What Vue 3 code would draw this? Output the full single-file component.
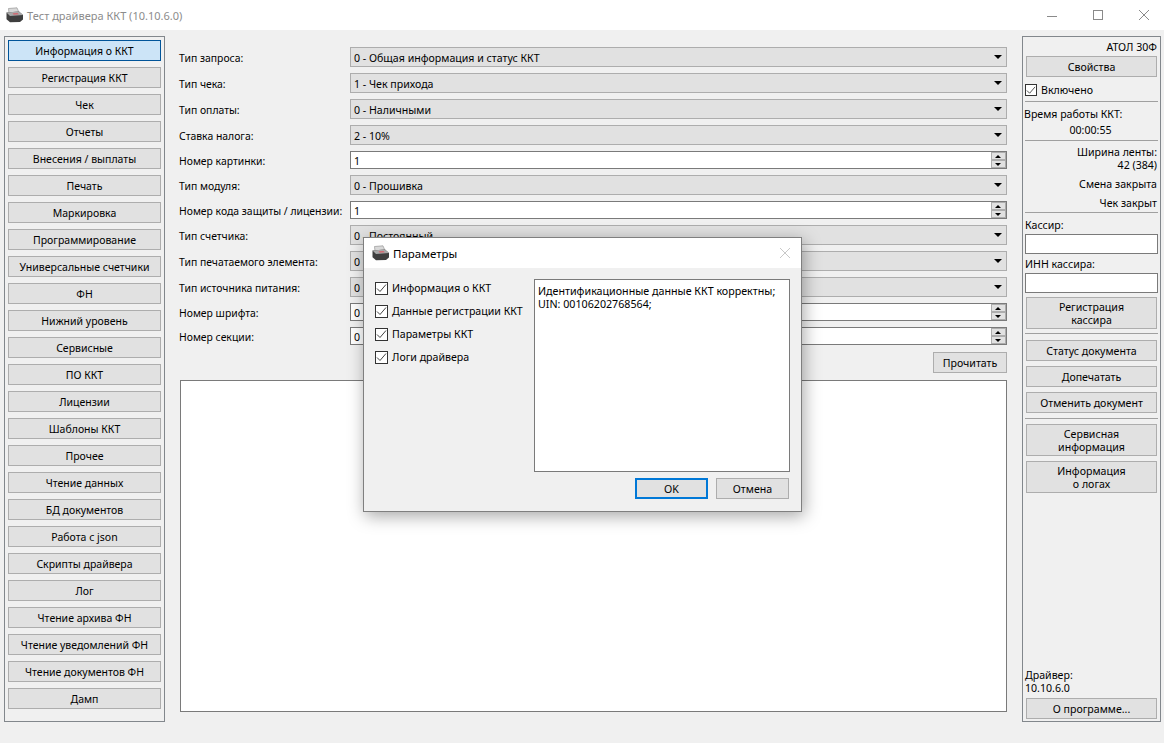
<script setup>
const navItems = ['Информация о ККТ','Регистрация ККТ','Чек','Отчеты','Внесения / выплаты','Печать','Маркировка','Программирование','Универсальные счетчики','ФН','Нижний уровень','Сервисные','ПО ККТ','Лицензии','Шаблоны ККТ','Прочее','Чтение данных','БД документов','Работа с json','Скрипты драйвера','Лог','Чтение архива ФН','Чтение уведомлений ФН','Чтение документов ФН','Дамп']
const fields = [
  { label: 'Тип запроса:', value: '0 - Общая информация и статус ККТ', type: 'select' },
  { label: 'Тип чека:', value: '1 - Чек прихода', type: 'select' },
  { label: 'Тип оплаты:', value: '0 - Наличными', type: 'select' },
  { label: 'Ставка налога:', value: '2 - 10%', type: 'select' },
  { label: 'Номер картинки:', value: '1', type: 'spin' },
  { label: 'Тип модуля:', value: '0 - Прошивка', type: 'select' },
  { label: 'Номер кода защиты / лицензии:', value: '1', type: 'spin' },
  { label: 'Тип счетчика:', value: '0 - Постоянный', type: 'select' },
  { label: 'Тип печатаемого элемента:', value: '0', type: 'select' },
  { label: 'Тип источника питания:', value: '0', type: 'select' },
  { label: 'Номер шрифта:', value: '0', type: 'spin' },
  { label: 'Номер секции:', value: '0', type: 'spin' },
]
const checks = ['Информация о ККТ','Данные регистрации ККТ','Параметры ККТ','Логи драйвера']
</script>

<template>
  <div class="window">
    <header class="titlebar">
      <svg class="appicon" width="18" height="16" viewBox="0 0 18 16">
        <path d="M2.5 1.500L11 .8l2 4.700-10 1z" fill="#d8d8d8" stroke="#8a8a8a" stroke-width=".6"/>
        <path d="M.5 5.500L13 4.500l4 3.500v4.500l-3 2.500-10 .3-3.500-3z" fill="#3f3f3f"/>
        <path d="M.5 5.500L13 4.500l4 3.500L4 9z" fill="#a8a8a8"/>
        <path d="M6.500 6.600l5-.4 1.300 1-5.200.4z" fill="#e2505c"/>
      </svg>
      <span class="apptitle">Тест драйвера ККТ (10.10.6.0)</span>
      <div class="winctl">
        <svg width="12" height="12" viewBox="0 0 12 12"><path d="M1 7.500h10" stroke="#8a8a8a"/></svg>
        <svg width="12" height="12" viewBox="0 0 12 12"><rect x="1.500" y="1.500" width="9" height="9" fill="none" stroke="#8a8a8a"/></svg>
        <svg width="12" height="12" viewBox="0 0 12 12"><path d="M1 1l10 10M11 1L1 11" stroke="#8a8a8a"/></svg>
      </div>
    </header>

    <main class="body">
      <nav class="leftpanel">
        <button v-for="(n, i) in navItems" :key="n" class="btn navbtn" :class="{ selected: i === 0 }">{{ n }}</button>
      </nav>

      <section class="center">
        <div v-for="f in fields" :key="f.label" class="row" :class="'row-' + f.type">
          <span class="rowlabel">{{ f.label }}</span>
          <div v-if="f.type === 'select'" class="select">
            <span>{{ f.value }}</span>
            <i class="caret"></i>
          </div>
          <div v-else class="spin">
            <span>{{ f.value }}</span>
            <div class="spinbtns"><b><i class="up"></i></b><b><i class="down"></i></b></div>
          </div>
        </div>
        <div class="readrow"><button class="btn readbtn">Прочитать</button></div>
        <div class="output"></div>
      </section>

      <aside class="rightpanel">
        <div class="r-model">АТОЛ 30Ф</div>
        <button class="btn rb props">Свойства</button>
        <label class="r-check"><span class="cb"><svg width="11" height="11" viewBox="0 0 11 11"><path d="M1 5.500l3 3 6-7" fill="none" stroke="#444" stroke-width="1"/></svg></span>Включено</label>
        <hr class="sep s1">
        <div class="r-time">Время работы ККТ:</div>
        <div class="r-clock">00:00:55</div>
        <hr class="sep s2">
        <div class="r-right r-width">Ширина ленты:<br>42 (384)</div>
        <div class="r-right r-shift">Смена закрыта</div>
        <div class="r-right r-receipt">Чек закрыт</div>
        <hr class="sep s3">
        <div class="r-label r-cashier">Кассир:</div>
        <div class="r-input"></div>
        <div class="r-label r-inn">ИНН кассира:</div>
        <div class="r-input"></div>
        <button class="btn rb tall reg">Регистрация<br>кассира</button>
        <hr class="sep s4">
        <button class="btn rb doc first">Статус документа</button>
        <button class="btn rb doc">Допечатать</button>
        <button class="btn rb doc">Отменить документ</button>
        <hr class="sep s5">
        <button class="btn rb tall svc">Сервисная<br>информация</button>
        <button class="btn rb tall logs">Информация<br>о логах</button>
        <div class="r-driver">Драйвер:<br>10.10.6.0</div>
        <button class="btn rb about">О программе...</button>
      </aside>
    </main>

    <div class="dialog">
      <div class="dlgtitle">
        <svg class="appicon" width="18" height="16" viewBox="0 0 18 16">
          <path d="M2.500 1.500L11 .8l2 4.700-10 1z" fill="#d8d8d8" stroke="#8a8a8a" stroke-width=".6"/>
          <path d="M.5 5.500L13 4.500l4 3.500v4.500l-3 2.500-10 .3-3.500-3z" fill="#3f3f3f"/>
          <path d="M.5 5.500L13 4.500l4 3.500L4 9z" fill="#a8a8a8"/>
          <path d="M6.500 6.600l5-.4 1.300 1-5.200.4z" fill="#e2505c"/>
        </svg>
        <span class="dlgname">Параметры</span>
        <svg class="dlgclose" width="12" height="12" viewBox="0 0 12 12"><path d="M1 1l10 10M11 1L1 11" stroke="#c8c8c8"/></svg>
      </div>
      <div class="dlgbody">
        <div class="dlgchecks">
          <label v-for="c in checks" :key="c" class="dlgcheck"><span class="cb"><svg width="11" height="11" viewBox="0 0 11 11"><path d="M1 5.500l3 3 6-7" fill="none" stroke="#444" stroke-width="1"/></svg></span>{{ c }}</label>
        </div>
        <div class="dlgright">
          <div class="dlgtext">Идентификационные данные ККТ корректны;<br>UIN: 00106202768564;</div>
          <div class="dlgbtns">
            <button class="btn dlgbtn ok">OK</button>
            <button class="btn dlgbtn">Отмена</button>
          </div>
        </div>
      </div>
    </div>
  </div>
</template>

<style>
html, body { margin: 0; padding: 0; overflow: hidden; }
</style>

<style scoped>
.window {
  width: 1164px; height: 743px; background: #f0f0f0; position: relative; overflow: hidden;
  font-family: "Noto Sans", "Liberation Sans", sans-serif; font-size: 10.6px; color: #000;
  display: flex; flex-direction: column;
}
.titlebar { height: 30px; background: #fff; display: flex; align-items: center; flex: none; padding-left: 6px; box-sizing: border-box; }
.appicon { flex: none; }
.apptitle { margin-left: 3px; font-size: 11px; color: #8c8c8c; }
.winctl { margin-left: auto; display: flex; gap: 34px; padding-right: 14px; }
.body { flex: 1; display: flex; padding: 6px 3px 21px 4px; box-sizing: border-box; min-height: 0; }
.btn {
  font: inherit; color: #000; background: #e1e1e1; border: 1px solid #adadad; padding: 2px 0 0; margin: 0;
  box-sizing: border-box; text-align: center; display: block; line-height: 13px;
}
.leftpanel { width: 161px; border: 1px solid #82878c; box-sizing: border-box; padding: 3px; display: flex; flex-direction: column; gap: 6px; flex: none; }
.navbtn { width: 153px; height: 21px; flex: none; font-size: 10.5px; }
.navbtn.selected { background: #cce4f7; border-color: #005499; }
.center { width: 827px; margin-left: 15px; padding-top: 11px; flex: none; box-sizing: border-box; display: flex; flex-direction: column; gap: 6px; }
.row { display: flex; align-items: center; flex: none; }
.row-select { height: 20px; }
.row-spin { height: 18px; }
.rowlabel { width: 170px; flex: none; white-space: nowrap; margin-left: -1px; padding: 2px 1px 0 0; font-size: 10.4px; box-sizing: content-box; }
.select, .spin { width: 657px; box-sizing: border-box; display: flex; align-items: center; padding: 2px 0 0 3px; position: relative; flex: none; }
.select { height: 20px; background: #e1e1e1; border: 1px solid #adadad; }
.spin { height: 18px; background: #fff; border: 1px solid #7a7a7a; }
.caret { position: absolute; right: 4px; top: 7px; width: 0; height: 0; border: 4px solid transparent; border-top: 4px solid #000; border-bottom: 0; }
.spinbtns { position: absolute; right: 0; top: 0; bottom: 0; width: 14px; display: flex; flex-direction: column; border-left: 1px solid #adadad; }
.spinbtns b { flex: 1; background: #e1e1e1; border: 1px solid #adadad; border-left: 0; box-sizing: border-box; position: relative; }
.up, .down { position: absolute; left: 3px; top: 2px; width: 0; height: 0; border: 3px solid transparent; }
.up { border-top: 0; border-bottom: 3px solid #000; }
.down { border-bottom: 0; border-top: 3px solid #000; }
.readrow { display: flex; justify-content: flex-end; margin-top: 1px; flex: none; }
.readbtn { width: 74px; height: 21px; }
.output { margin-top: 1px; height: 332px; background: #fff; border: 1px solid #7a7a7a; box-sizing: border-box; flex: none; }
.rightpanel { width: 139px; margin-left: 15px; flex: none; border: 1px solid #82878c; box-sizing: border-box; padding: 3px 3px 0 1px; display: flex; flex-direction: column; }
.r-model { text-align: right; height: 14px; line-height: 14px; }
.rb { width: 131px; height: 21px; margin-left: 2px; flex: none; }
.rb.tall { height: 32px; }
.props { margin-top: 2px; }
.r-check { display: flex; align-items: center; margin: 6px 0 0 2px; height: 14px; }
.r-check .cb { width: 12px; height: 12px; margin-right: 4px; margin-left: -1px; }
.cb { width: 13px; height: 13px; box-sizing: border-box; border: 1px solid #333; background: #fff; display: inline-flex; align-items: center; justify-content: center; flex: none; margin-right: 4px; }
.sep { height: 1px; border: 0; background: #a0a0a0; margin: 0 0 0 1px; flex: none; width: 133px; }
.s1 { margin-top: 4px; }
.r-time { margin-top: 5px; height: 14px; line-height: 14px; }
.r-clock { margin-top: 2px; height: 14px; line-height: 14px; text-align: center; }
.s2 { margin-top: 3px; }
.r-right { text-align: right; line-height: 13px; }
.r-width { margin-top: 5px; }
.r-shift { margin-top: 6px; }
.r-receipt { margin-top: 6px; }
.s3 { margin-top: 2px; }
.r-label { height: 14px; line-height: 14px; padding-left: 1px; }
.r-cashier { margin-top: 5px; }
.r-inn { margin-top: 3px; }
.r-input { height: 20px; margin: 2px 0 0 1px; width: 133px; background: #fff; border: 1px solid #7a7a7a; box-sizing: border-box; flex: none; }
.reg { margin-top: 4px; }
.s4 { margin-top: 4px; }
.doc { margin-top: 5px; }
.doc.first { margin-top: 6px; }
.s5 { margin-top: 5px; }
.svc { margin-top: 5px; }
.logs { margin-top: 5px; }
.r-driver { margin-top: auto; padding-left: 1px; line-height: 13px; }
.about { margin: 3px 0 2px 2px; }
.dialog {
  position: absolute; left: 363px; top: 237px; width: 439px; height: 275px; box-sizing: border-box;
  background: #f0f0f0; border: 1px solid #7f7f7f; box-shadow: 2px 4px 16px rgba(0,0,0,.35); display: flex; flex-direction: column;
}
.dlgtitle { height: 30px; background: #fff; display: flex; align-items: center; padding-left: 8px; flex: none; position: relative; }
.dlgname { margin-left: 3px; font-size: 11.5px; }
.dlgclose { margin-left: auto; margin-right: 10px; }
.dlgbody { flex: 1; display: flex; padding: 11px 11px 0 11px; }
.dlgchecks { width: 159px; flex: none; display: flex; flex-direction: column; gap: 9px; padding-top: 2px; }
.dlgcheck { display: flex; align-items: center; height: 14px; }
.dlgright { width: 256px; }
.dlgtext { height: 193px; box-sizing: border-box; background: #fff; border: 1px solid #7a7a7a; padding: 5px 3px; line-height: 13px; font-size: 10.7px; }
.dlgbtns { display: flex; justify-content: flex-end; gap: 8px; margin-top: 6px; padding-right: 1px; }
.dlgbtn { width: 73px; height: 21px; }
.dlgbtn.ok { border: 2px solid #0078d7; }
</style>
